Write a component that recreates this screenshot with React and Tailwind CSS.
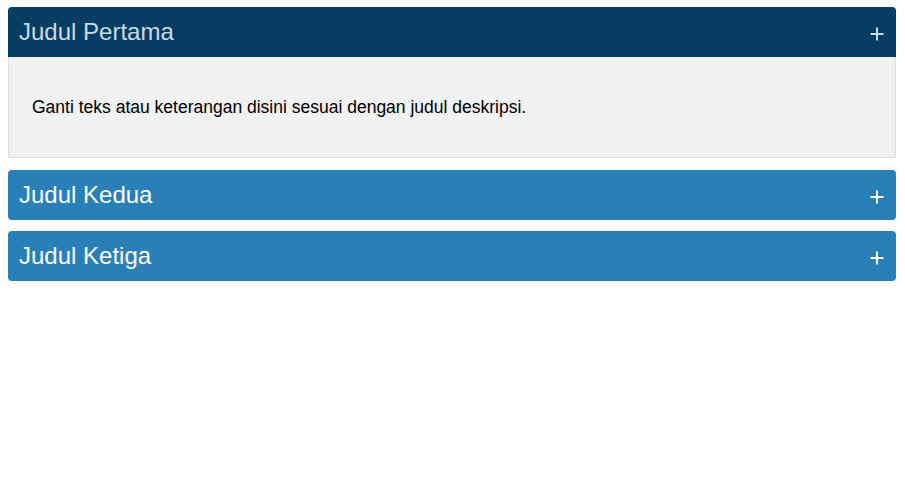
export default function App() {
  const items = [
    { title: "Judul Pertama", open: true },
    { title: "Judul Kedua", open: false },
    { title: "Judul Ketiga", open: false },
  ];
  return (
    <div className="min-h-[501px] bg-white pt-[7px] px-[8px] pr-[9px]" style={{ fontFamily: '"Liberation Sans", Arial, sans-serif' }}>
      {items.map((it, i) => (
        <div key={i} className={i === 0 ? "mb-[12px]" : "mb-[11px]"}>
          <div
            className={
              "h-[50px] flex items-center justify-between pl-[11px] pr-[11px] " +
              (it.open
                ? "bg-[#073d63] text-[#c9dbe8] rounded-t-[4px]"
                : "bg-[#2980b9] text-white rounded-[4px]")
            }
          >
            <span className="text-[24px] leading-none">{it.title}</span>
            <svg width="16" height="16" viewBox="0 0 16 16" className="mt-[3px]">
              <path d="M8 1.5V14.5M1.5 8H14.5" stroke="currentColor" strokeWidth="2" />
            </svg>
          </div>
          {it.open && (
            <div className="h-[101px] border border-t-0 border-[#dddddd] bg-[#f0f1f1] flex items-center pl-[23px] text-[17.5px] text-black">
              Ganti teks atau keterangan disini sesuai dengan judul deskripsi.
            </div>
          )}
        </div>
      ))}
    </div>
  );
}
